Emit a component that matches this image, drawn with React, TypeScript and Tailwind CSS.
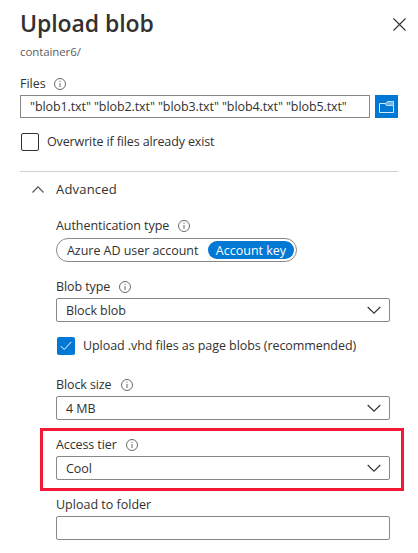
import React from 'react';

function InfoIcon() {
  return (
    <svg width="12" height="12" viewBox="0 0 12 12" fill="none" className="shrink-0">
      <circle cx="6" cy="6" r="5.5" stroke="#6b6967" />
      <path d="M6 5v4" stroke="#6b6967" />
      <path d="M6 2.8v1.1" stroke="#6b6967" />
    </svg>
  );
}

function Label({ text, className, info = true }: { text: string; className: string; info?: boolean }) {
  return (
    <div className="flex h-5 items-center gap-[9px]">
      <span className={className}>{text}</span>
      {info && <InfoIcon />}
    </div>
  );
}

function Select({ value }: { value: string }) {
  return (
    <div className="flex h-6 w-[334px] items-center justify-between rounded-[2px] border border-[#8a8886] pr-2 pl-[9px]">
      <span className="pt-[2px] tracking-[-0.08px]">{value}</span>
      <svg width="14" height="8" viewBox="0 0 14 8" fill="none">
        <path d="M.7 1l6.3 6.2L13.300 1" stroke="#323130" strokeWidth="1.1" />
      </svg>
    </div>
  );
}

export default function App() {
  return (
    <main className="h-[553px] w-[418px] overflow-hidden bg-white font-['Open_Sans','Noto_Sans',sans-serif] text-[12.5px] leading-5 whitespace-nowrap text-[#323130]">
      <header className="flex h-[74px] justify-between pt-2 pr-3 pl-5">
        <div>
          <h1 className="h-8 text-[23px] leading-[31px] font-semibold tracking-[-0.07px]">Upload blob</h1>
          <p className="h-5 pt-1 text-[11.5px] leading-[15px] tracking-[-0.1px] text-[#605e5c]">container6/</p>
        </div>
        <svg width="13" height="13" viewBox="0 0 13 13" fill="none" className="mt-[10px]">
          <path d="M.5.5l12 12M12.500.5l-12 12" stroke="#323130" strokeWidth="1.1" />
        </svg>
      </header>

      <section className="pl-5">
        <div className="h-[21px]">
          <Label text="Files" className="-mr-px" />
        </div>
        <div className="flex gap-[5px]">
          <div className="flex h-[23px] w-[350px] items-center border border-[#8a8886] pl-[9px]">
            <span className="tracking-[-0.09px]">"blob1.txt" "blob2.txt" "blob3.txt" "blob4.txt" "blob5.txt"</span>
          </div>
          <button className="flex size-[23px] items-center justify-center bg-[#0078d4]">
            <svg width="15" height="12" viewBox="0 0 15 12" fill="none">
              <path d="M.5 2.500h6l2-2h6v11H.5z" stroke="#d3ebfc" />
              <path d="M6.500 3.500l1.500 1h6.500v-4h-6l-2 2z" fill="#6ab4ea" stroke="#b9def8" />
            </svg>
          </button>
        </div>
        <div className="mt-[15px] flex h-[18px] items-center gap-2 pl-px">
          <span className="size-[18px] rounded-[2px] border border-[#323130]" />
          <span className="tracking-[-0.13px]">Overwrite if files already exist</span>
        </div>
        <div className="mt-5 w-[378px] border-t border-[#d2d0ce]" />
        <div className="mt-[7px] flex h-5 items-center gap-3 pl-3">
          <svg width="12" height="7" viewBox="0 0 12 7" fill="none">
            <path d="M.5 6.500L6 .9l5.500 5.600" stroke="#504e4c" strokeWidth="1.1" />
          </svg>
          <span className="text-[13px] tracking-[0.2px]">Advanced</span>
        </div>
      </section>

      <section className="pt-[17px] pl-14">
        <Label text="Authentication type" className="tracking-[-0.06px]" />
        <div className="mt-[2px] flex h-6 w-[241px] items-center rounded-full border border-[#8a8886] pr-[2px] pl-[10px]">
          <span className="w-[141px] pt-px tracking-[-0.04px]">Azure AD user account</span>
          <span className="flex h-[18px] w-[86px] shrink-0 items-center justify-center rounded-full bg-[#0078d4] pt-px text-white">
            Account key
          </span>
        </div>
        <div className="mt-[15px] mb-px">
          <Label text="Blob type" className="tracking-[-0.1px]" />
        </div>
        <Select value="Block blob" />
        <div className="mt-[15px] flex h-[18px] items-center gap-2 pl-px">
          <span className="flex size-[18px] items-center justify-center rounded-[2px] bg-[#0078d4]">
            <svg width="12" height="10" viewBox="0 0 12 10" fill="none">
              <path d="M.7 5l3.500 3.500L11.300.9" stroke="white" />
            </svg>
          </span>
          <span className="tracking-[-0.07px]">Upload .vhd files as page blobs (recommended)</span>
        </div>
        <div className="mt-5 mb-px">
          <Label text="Block size" className="tracking-[-0.1px]" />
        </div>
        <Select value="4 MB" />
      </section>

      <section className="mt-2 ml-10 h-[63px] w-[364px] border-3 border-[#f31836] pt-1 pl-[13px]">
        <Label text="Access tier" className="tracking-[-0.1px]" />
        <div className="mt-px">
          <Select value="Cool" />
        </div>
      </section>

      <section className="pt-1 pl-14">
        <Label text="Upload to folder" className="" info={false} />
        <div className="mt-px h-6 w-[334px] rounded-[2px] border border-[#8a8886]" />
      </section>
    </main>
  );
}
